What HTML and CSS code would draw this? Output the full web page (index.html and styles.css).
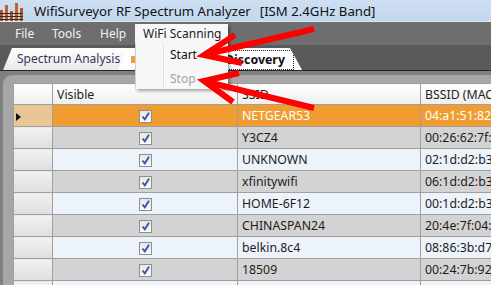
FILE: index.html
```html
<!DOCTYPE html>
<html lang="en">
<head>
  <meta charset="UTF-8">
  <title>WifiSurveyor RF Spectrum Analyzer</title>
  <link rel="stylesheet" href="styles.css">
</head>
<body>
  <div class="window">
    <!-- Title bar -->
    <div class="titlebar">
      <svg class="app-icon" width="26" height="20" viewBox="0 0 26 20">
        <rect x="0" y="9" width="3" height="11" fill="#b5552a"/>
        <rect x="5" y="4" width="3" height="16" fill="#c2602c"/>
        <rect x="10" y="10" width="3" height="10" fill="#b5552a"/>
        <rect x="15" y="2" width="3" height="18" fill="#c2602c"/>
        <rect x="20" y="7" width="3" height="13" fill="#b5552a"/>
        <g fill="#3b2a20">
          <rect x="0" y="12" width="23" height="1"/>
          <rect x="0" y="15" width="23" height="1"/>
          <rect x="0" y="18" width="23" height="1"/>
        </g>
      </svg>
      <span class="title">WifiSurveyor RF Spectrum Analyzer</span>
      <span class="band">[ISM 2.4GHz Band]</span>
    </div>

    <!-- Menu bar -->
    <div class="menubar">
      <div class="menu-item file">File</div>
      <div class="menu-item tools">Tools</div>
      <div class="menu-item help">Help</div>
      <div class="menu-item open">WiFi Scanning
        <div class="dropdown">
          <div class="dd-item">Start</div>
          <div class="dd-item disabled">Stop</div>
        </div>
      </div>
    </div>

    <!-- Tabs -->
    <div class="tabstrip">
      <div class="tab">Spectrum Analysis</div>
      <div class="tab active">
        <span class="tab-icon"></span>
        <span class="focus">Network Discovery</span>
      </div>
    </div>

    <!-- Grid -->
    <div class="content">
      <div class="panel">
        <table class="grid">
          <colgroup>
            <col class="c-head">
            <col class="c-vis">
            <col class="c-ssid">
            <col class="c-mac">
          </colgroup>
          <tr class="header">
            <th></th>
            <th>Visible</th>
            <th>SSID</th>
            <th>BSSID (MAC)</th>
          </tr>
          <tr class="row selected">
            <td class="rh"><span class="cur"></span></td>
            <td class="vis"><span class="chk"><svg width="11" height="11" viewBox="0 0 11 11"><path d="M2.5 5.5 L4.8 8.3 L9 1.8" /></svg></span></td>
            <td>NETGEAR53</td>
            <td>04:a1:51:82:9c:6e</td>
          </tr>
          <tr class="row odd">
            <td class="rh"></td>
            <td class="vis"><span class="chk"><svg width="11" height="11" viewBox="0 0 11 11"><path d="M2.5 5.5 L4.8 8.3 L9 1.8" /></svg></span></td>
            <td>Y3CZ4</td>
            <td>00:26:62:7f:ad:14</td>
          </tr>
          <tr class="row even">
            <td class="rh"></td>
            <td class="vis"><span class="chk"><svg width="11" height="11" viewBox="0 0 11 11"><path d="M2.5 5.5 L4.8 8.3 L9 1.8" /></svg></span></td>
            <td>UNKNOWN</td>
            <td>02:1d:d2:b3:6a:40</td>
          </tr>
          <tr class="row odd">
            <td class="rh"></td>
            <td class="vis"><span class="chk"><svg width="11" height="11" viewBox="0 0 11 11"><path d="M2.5 5.5 L4.8 8.3 L9 1.8" /></svg></span></td>
            <td>xfinitywifi</td>
            <td>06:1d:d2:b3:6a:40</td>
          </tr>
          <tr class="row even">
            <td class="rh"></td>
            <td class="vis"><span class="chk"><svg width="11" height="11" viewBox="0 0 11 11"><path d="M2.5 5.5 L4.8 8.3 L9 1.8" /></svg></span></td>
            <td>HOME-6F12</td>
            <td>00:1d:d2:b3:6a:40</td>
          </tr>
          <tr class="row odd">
            <td class="rh"></td>
            <td class="vis"><span class="chk"><svg width="11" height="11" viewBox="0 0 11 11"><path d="M2.5 5.5 L4.8 8.3 L9 1.8" /></svg></span></td>
            <td>CHINASPAN24</td>
            <td>20:4e:7f:04:67:b2</td>
          </tr>
          <tr class="row even">
            <td class="rh"></td>
            <td class="vis"><span class="chk"><svg width="11" height="11" viewBox="0 0 11 11"><path d="M2.5 5.5 L4.8 8.3 L9 1.8" /></svg></span></td>
            <td>belkin.8c4</td>
            <td>08:86:3b:d7:38:c4</td>
          </tr>
          <tr class="row odd">
            <td class="rh"></td>
            <td class="vis"><span class="chk"><svg width="11" height="11" viewBox="0 0 11 11"><path d="M2.5 5.5 L4.8 8.3 L9 1.8" /></svg></span></td>
            <td>18509</td>
            <td>00:24:7b:92:2e:10</td>
          </tr>
          <tr class="row even">
            <td class="rh"></td>
            <td class="vis"></td>
            <td></td>
            <td></td>
          </tr>
        </table>
      </div>
    </div>

    <!-- Red annotation arrows -->
    <svg class="arrows" width="491" height="285" viewBox="0 0 491 285">
      <g stroke="#ff0000" stroke-width="6" fill="none" stroke-linejoin="miter">
        <line x1="207" y1="54" x2="314" y2="29"/>
        <polyline points="235,35 204,55 242,63"/>
        <line x1="207" y1="82" x2="314" y2="108"/>
        <polyline points="239,73 204,81 233,102"/>
      </g>
    </svg>
  </div>
</body>
</html>
```

FILE: styles.css
```css
* {
  box-sizing: border-box;
  margin: 0;
  padding: 0;
}

body {
  font-family: "Noto Sans", "Open Sans", sans-serif;
  font-size: 12px;
  background-color: #7d7d7d;
  overflow: hidden;
}

.window {
  position: relative;
  width: 491px;
  height: 285px;
  overflow: hidden;
}

/* title bar */
.titlebar {
  height: 22px;
  display: flex;
  align-items: center;
  background: linear-gradient(#cfdff2, #c3d7ee);
  border-bottom: 1px solid #dde7f2;
  color: #111;
  font-size: 13.2px;
}

.app-icon {
  margin-right: 8px;
}

.title {
  margin-right: 9px;
}

/* menu bar */
.menubar {
  height: 23px;
  display: flex;
  background-color: #6e6e6e;
  color: #f2f2f2;
  padding-top: 2px;
}

.menu-item {
  padding-left: 7px;
  line-height: 19px;
}

.file { width: 45px; padding-left: 15px; }
.tools { width: 48px; }
.help { width: 42px; }

.menu-item.open {
  position: relative;
  width: 93px;
  background-color: #f7f7f7;
  color: #1b1b1b;
  padding-left: 8px;
  z-index: 5;
  box-shadow: 2px 2px 3px rgba(0, 0, 0, 0.35);
}

.dropdown {
  position: absolute;
  top: 19px;
  left: 0;
  width: 93px;
  height: 46px;
  background-color: #f7f7f7;
  border-left: 1px solid #d0d0d0;
  box-shadow: 2px 2px 3px rgba(0, 0, 0, 0.35);
  padding-top: 1px;
}

.dropdown::before {
  content: "";
  position: absolute;
  left: 27px;
  top: 2px;
  bottom: 2px;
  width: 1px;
  background-color: #e0e0e0;
  border-right: 1px solid #fff;
}

.dd-item {
  height: 22px;
  line-height: 22px;
  padding-left: 34px;
  color: #111;
}

.dd-item.disabled {
  color: #a3a3a3;
  margin-top: 2px;
}

/* tabs */
.tabstrip {
  height: 26px;
  display: flex;
  background-color: #5a5a5a;
  border-bottom: 1px solid #262626;
  padding-top: 3px;
  padding-left: 3px;
}

.tab {
  height: 22px;
  line-height: 22px;
  width: 126px;
  padding-left: 14px;
  white-space: nowrap;
  color: #3a3552;
  background: linear-gradient(#ffffff, #e9e9ee);
  clip-path: polygon(0 100%, 9px 0, 100% 0, 100% 100%);
}

.tab.active {
  position: relative;
  width: 184px;
  margin-left: -11px;
  padding-left: 10px;
  display: flex;
  align-items: center;
  background: #fdfdfd;
  font-weight: bold;
  font-size: 12.4px;
  color: #111;
  clip-path: polygon(0 100%, 8px 0, calc(100% - 12px) 0, 100% 100%);
}

.tab-icon {
  width: 5px;
  height: 7px;
  background-color: #f0a040;
  margin-left: 3px;
}

.focus {
  border: 1px dotted #222;
  height: 20px;
  line-height: 18px;
  width: 158px;
  text-align: right;
  padding-right: 8px;
  margin-top: 2px;
}

/* grid area */
.content {
  height: 214px;
  background-color: #808080;
  padding: 4px 0 0 3px;
}

.panel {
  height: 100%;
  background-color: #a6a6a6;
  border-radius: 9px 0 0 0;
  padding: 8px 0 0 10px;
  overflow: hidden;
}

.grid {
  border-collapse: collapse;
  table-layout: fixed;
  width: 558px;
  font-size: 12.3px;
}

.c-head { width: 39px; }
.c-vis { width: 185px; }
.c-ssid { width: 183px; }
.c-mac { width: 151px; }

.grid th,
.grid td {
  border: 1px solid #a0a0a0;
  text-align: left;
  font-weight: normal;
  padding-left: 4px;
  white-space: nowrap;
  overflow: hidden;
  color: #1c1c1c;
}

.grid th {
  height: 21px;
  background: linear-gradient(#ffffff, #eeeeee);
}

.grid td {
  height: 22px;
}

.grid td.rh {
  background: linear-gradient(#f2f2f2, #dedede);
  padding-left: 2px;
}

.grid td.vis {
  text-align: center;
  padding-left: 0;
}

.row.odd td { background-color: #d3d3d3; }
.row.even td { background-color: #edf3fa; }

.row.selected td {
  background-color: #f09c31;
  color: #ffffff;
}

.row.selected td.rh {
  background: #e8c794;
}

.cur {
  display: inline-block;
  width: 0;
  height: 0;
  border-top: 4px solid transparent;
  border-bottom: 4px solid transparent;
  border-left: 5px solid #111;
  vertical-align: middle;
}

.chk {
  display: inline-block;
  width: 13px;
  height: 13px;
  border: 1px solid #8e8f8f;
  background: linear-gradient(#e6e6e6, #fbfbfb);
  vertical-align: middle;
  line-height: 0;
}

.chk path {
  stroke: #3c55a5;
  stroke-width: 1.9;
  fill: none;
}

/* annotation arrows */
.arrows {
  position: absolute;
  top: 0;
  left: 0;
  pointer-events: none;
  z-index: 10;
}
```
